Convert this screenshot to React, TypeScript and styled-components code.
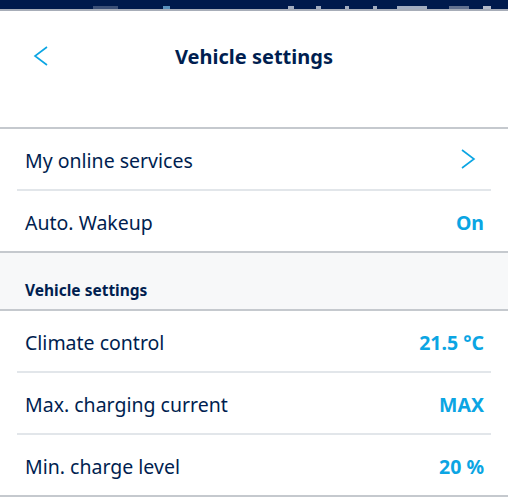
import React from 'react';
import styled, { createGlobalStyle } from 'styled-components';

const navy = '#001e50';
const blue = '#0ba5e3';

const GlobalStyle = createGlobalStyle`
  html, body {
    margin: 0;
    padding: 0;
    background: #ffffff;
  }
  body {
    font-family: "Noto Sans", "Open Sans", sans-serif;
    color: ${navy};
  }
`;

const Screen = styled.div`
  width: 508px;
  height: 500px;
  overflow: hidden;
  display: flex;
  flex-direction: column;
  background: #fff;
`;

// bande du haut (barre d'état coupée)
const StatusBar = styled.div`
  height: 9px;
  flex-shrink: 0;
  background: #001a4c;
  border-bottom: 2px solid #a7adb8;
  display: flex;
  align-items: flex-end;
  padding-left: 93px;
`;

const StatusMark = styled.span<{ $w: number; $gap: number; $color: string }>`
  display: block;
  align-self: flex-end;
  width: ${(p) => p.$w}px;
  height: 3px;
  margin-left: ${(p) => p.$gap}px;
  background: ${(p) => p.$color};
  opacity: 0.7;
`;

const Header = styled.header`
  height: 118px;
  flex-shrink: 0;
  border-bottom: 2px solid #c5c9ce;
  box-sizing: border-box;
`;

const NavRow = styled.div`
  height: 90px;
  display: grid;
  grid-template-columns: 80px 1fr 80px;
  align-items: center;
`;

const BackButton = styled.button`
  border: none;
  background: none;
  padding: 0 0 0 33px;
  display: flex;
  align-items: center;
  cursor: pointer;
`;

const Title = styled.h1`
  margin: 0;
  text-align: center;
  font-size: 20px;
  font-weight: 700;
  color: ${navy};
`;

const List = styled.div`
  display: flex;
  flex-direction: column;
`;

// la dernière ligne d'un groupe porte la séparation pleine largeur
const Row = styled.div<{ $last?: boolean }>`
  height: 62px;
  flex-shrink: 0;
  margin: ${(p) => (p.$last ? '0' : '0 17px')};
  padding: ${(p) => (p.$last ? '2px 24px 0 25px' : '2px 7px 0 8px')};
  display: flex;
  align-items: center;
  justify-content: space-between;
  border-bottom: 2px solid ${(p) => (p.$last ? '#c5c9ce' : '#e2e6ea')};
  box-sizing: border-box;
`;

const Label = styled.span`
  font-size: 19.5px;
  color: ${navy};
`;

const Value = styled.span`
  font-size: 19.5px;
  font-weight: 700;
  color: ${blue};
`;

const Arrow = styled.span`
  display: flex;
  margin-right: 8px;
  margin-top: -2px;
`;

const SectionHeader = styled.div`
  height: 58px;
  flex-shrink: 0;
  background: #f7f8f9;
  border-bottom: 2px solid #c5c9ce;
  box-sizing: border-box;
  display: flex;
  align-items: flex-end;
  padding: 0 0 8px 25px;
  font-size: 15.5px;
  font-weight: 700;
  color: ${navy};
`;

const Chevron = ({ dir }: { dir: 'left' | 'right' }) => (
  <svg width="16" height="20" viewBox="0 0 16 20" fill="none">
    <path
      d={dir === 'left' ? 'M14 1 L2 10 L14 19' : 'M2 1 L14 10 L2 19'}
      stroke={blue}
      strokeWidth="1.6"
      strokeLinejoin="miter"
    />
  </svg>
);

const App: React.FC = () => (
  <Screen>
    <GlobalStyle />
    <StatusBar>
      <StatusMark $w={25} $gap={0} $color="#56688a" />
      <StatusMark $w={7} $gap={45} $color="#7fc4ee" />
      <StatusMark $w={6} $gap={118} $color="#e8ecf2" />
      <StatusMark $w={5} $gap={22} $color="#e8ecf2" />
      <StatusMark $w={4} $gap={24} $color="#e8ecf2" />
      <StatusMark $w={4} $gap={24} $color="#e8ecf2" />
      <StatusMark $w={30} $gap={20} $color="#e8ecf2" />
      <StatusMark $w={20} $gap={22} $color="#8b97ad" />
      <StatusMark $w={8} $gap={14} $color="#ffffff" />
    </StatusBar>

    <Header>
      <NavRow>
        <BackButton aria-label="Back">
          <Chevron dir="left" />
        </BackButton>
        <Title>Vehicle settings</Title>
        <span />
      </NavRow>
    </Header>

    <List>
      <Row>
        <Label>My online services</Label>
        <Arrow>
          <Chevron dir="right" />
        </Arrow>
      </Row>
      <Row $last>
        <Label>Auto. Wakeup</Label>
        <Value>On</Value>
      </Row>

      <SectionHeader>Vehicle settings</SectionHeader>

      <Row>
        <Label>Climate control</Label>
        <Value>21.5 °C</Value>
      </Row>
      <Row>
        <Label>Max. charging current</Label>
        <Value>MAX</Value>
      </Row>
      <Row $last>
        <Label>Min. charge level</Label>
        <Value>20 %</Value>
      </Row>
    </List>
  </Screen>
);

export default App;
